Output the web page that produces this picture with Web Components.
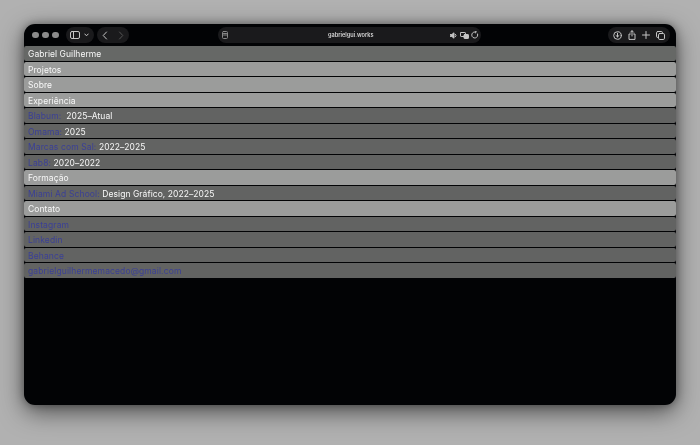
<!DOCTYPE html>
<html lang="pt">
<head>
<meta charset="utf-8">
<title>gabrielgui.works</title>
<style>
  html, body { margin: 0; height: 100%; }
  body {
    background: #b1b1b1;
    padding: 24px 24px 40px;
    box-sizing: border-box;
    height: 445px;
    overflow: hidden;
    font-family: Inter, "Liberation Sans", sans-serif;
  }
</style>
</head>
<body>
<browser-window>
  <browser-toolbar slot="toolbar" url="gabrielgui.works"></browser-toolbar>
  <site-row kind="dark" style="--row-bg:#666866">Gabriel Guilherme</site-row>
  <site-row kind="light">Projetos</site-row>
  <site-row kind="light">Sobre</site-row>
  <site-row kind="light">Experiência</site-row>
  <site-row><a-link>Blabum:</a-link>  2025–Atual</site-row>
  <site-row><a-link>Omama:</a-link> 2025</site-row>
  <site-row><a-link>Marcas com Sal:</a-link> 2022–2025</site-row>
  <site-row><a-link>Lab8:</a-link> 2020–2022</site-row>
  <site-row kind="light">Formação</site-row>
  <site-row><a-link>Miami Ad School:</a-link> Design Gráfico, 2022–2025</site-row>
  <site-row kind="light">Contato</site-row>
  <site-row><a-link>Instagram</a-link></site-row>
  <site-row><a-link>Linkedin</a-link></site-row>
  <site-row><a-link>Behance</a-link></site-row>
  <site-row><a-link>gabrielguilhermemacedo@gmail.com</a-link></site-row>
</browser-window>

<script>
class BrowserWindow extends HTMLElement {
  constructor() {
    super();
    const shadowRoot = this.attachShadow({ mode: "open" });
    shadowRoot.innerHTML = `<style>
  :host {
    display: flex;
    flex-direction: column;
    width: 652px;
    height: 381px;
    background: #020305;
    border-radius: 11px;
    overflow: hidden;
    box-shadow: 0 7px 24px rgb(0 0 0 / 55%), 0 0 8px rgb(0 0 0 / 35%);
  }
  .rows {
    display: flex;
    flex-direction: column;
    gap: 1px;
    filter: blur(.25px);
  }
</style>
<slot name="toolbar"></slot>
<div class="rows"><slot></slot></div>`;
  }
}
customElements.define("browser-window", BrowserWindow);

class BrowserToolbar extends HTMLElement {
  constructor() {
    super();
    const shadowRoot = this.attachShadow({ mode: "open" });
    shadowRoot.innerHTML = `<style>
  :host {
    display: flex;
    align-items: center;
    height: 22px;
    flex-shrink: 0;
    padding: 0 6px 0 8px;
    box-sizing: border-box;
    color: #c4c4c4;
    filter: blur(.25px);
  }
  svg { display: block; fill: none; stroke: currentColor; stroke-width: 1; stroke-linecap: round; stroke-linejoin: round; }
  .dots { display: flex; gap: 3.5px; margin-right: 7px; }
  .dots i { width: 6.5px; height: 6.5px; border-radius: 50%; background: #8b8b8b; }
  .pill {
    display: flex;
    align-items: center;
    height: 16px;
    border-radius: 8px;
    background: #1a1a1c;
  }
  .side { width: 29px; gap: 4px; padding-left: 4px; box-sizing: border-box; margin-right: 3px; }
  .nav { width: 32px; margin-right: 89px; justify-content: space-around; }
  .nav .next { color: #555; }
  .url {
    display: grid;
    grid-template-columns: 1fr auto 1fr;
    width: 264px;
    padding: 0 2px 0 4px;
    box-sizing: border-box;
    margin-right: 127px;
  }
  .host { font-size: 5.6px; font-weight: 600; color: #d6d6d6; }
  .tail { display: flex; align-items: center; gap: 2px; justify-self: end; }
  .tools { width: 62px; justify-content: space-around; padding: 0 2px; box-sizing: border-box; }
</style>
<div class="dots"><i></i><i></i><i></i></div>
<div class="pill side">
  <svg width="10" height="8" viewBox="0 0 10 8"><rect x=".5" y=".5" width="9" height="7" rx="1.5"/><path d="M3.5 .5v7"/></svg>
  <svg width="5" height="4" viewBox="0 0 5 4"><path d="M.8 1l1.7 1.8L4.2 1"/></svg>
</div>
<div class="pill nav">
  <svg width="6" height="9" viewBox="0 0 6 9" stroke-width="1.3"><path d="M4.5 1L1.2 4.5 4.5 8"/></svg>
  <svg class="next" width="6" height="9" viewBox="0 0 6 9"><path d="M1.5 1l3.3 3.5L1.5 8"/></svg>
</div>
<div class="pill url">
  <svg width="6" height="8" viewBox="0 0 6 8" style="color:#888"><rect x=".5" y=".5" width="5" height="7" rx="1"/><path d="M1.5 2.5h3M1.5 4h3"/></svg>
  <span class="host"></span>
  <span class="tail">
    <svg width="8" height="7" viewBox="0 0 8 7"><path d="M.5 2.5h1.3L4 .8v5.4L1.8 4.5H.5z" fill="currentColor"/><path d="M5.5 2.3a1.6 1.6 0 010 2.4"/></svg>
    <svg width="9" height="7" viewBox="0 0 9 7"><rect x=".5" y=".5" width="5" height="4" rx=".6"/><rect x="4" y="2.5" width="4.5" height="4" rx=".6" fill="currentColor"/></svg>
    <svg width="8" height="8" viewBox="0 0 8 8"><path d="M6.6 3A3 3 0 114 1h1M4.3 0l1 1-1 1"/></svg>
  </span>
</div>
<div class="pill tools">
  <svg width="9" height="9" viewBox="0 0 9 9"><circle cx="4.5" cy="4.5" r="3.8"/><path d="M4.5 2.2v3.6M3 4.5l1.5 1.4L6 4.5"/></svg>
  <svg width="8" height="10" viewBox="0 0 8 10"><path d="M2.4 4H1v5.4h6V4H5.6M4 6V.8M2.5 2.2L4 .7l1.5 1.5"/></svg>
  <svg width="8" height="8" viewBox="0 0 8 8" stroke-width="1.2"><path d="M4 .5v7M.5 4h7"/></svg>
  <svg width="9" height="9" viewBox="0 0 9 9"><rect x=".5" y=".5" width="6" height="6" rx="1.3"/><rect x="2.5" y="2.5" width="6" height="6" rx="1.3" fill="#1a1a1c"/></svg>
</div>`;
    shadowRoot.querySelector(".host").textContent = this.getAttribute("url");
  }
}
customElements.define("browser-toolbar", BrowserToolbar);

class SiteRow extends HTMLElement {
  constructor() {
    super();
    const shadowRoot = this.attachShadow({ mode: "open" });
    shadowRoot.innerHTML = `<style>
  :host {
    display: block;
    height: 14.5px;
    line-height: 16px;
    padding-left: 4px;
    background: var(--row-bg, #626362);
    border-radius: 2px;
    color: #f8f8f8;
    font-size: 8.5px;
    letter-spacing: .06px;
    white-space: pre;
  }
  :host([kind="light"]) {
    background: #9b9c9b;
  }
</style><slot></slot>`;
  }
}
customElements.define("site-row", SiteRow);

class ALink extends HTMLElement {
  constructor() {
    super();
    const shadowRoot = this.attachShadow({ mode: "open" });
    shadowRoot.innerHTML = `<style>
  :host { color: #3b4096; letter-spacing: .12px; }
</style><slot></slot>`;
  }
}
customElements.define("a-link", ALink);
</script>
</body>
</html>
